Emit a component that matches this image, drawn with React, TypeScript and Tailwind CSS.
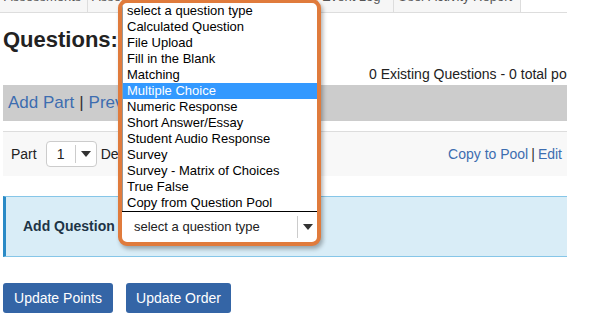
import React from 'react';

const questionTypes = [
  'select a question type',
  'Calculated Question',
  'File Upload',
  'Fill in the Blank',
  'Matching',
  'Multiple Choice',
  'Numeric Response',
  'Short Answer/Essay',
  'Student Audio Response',
  'Survey',
  'Survey - Matrix of Choices',
  'True False',
  'Copy from Question Pool',
];

const tabs = [
  { label: 'Assessments', width: 'w-[88px]' },
  { label: 'Assessment Types', width: 'w-[122px]' },
  { label: 'Question Pools', width: 'w-[108px]' },
  { label: 'Event Log', width: 'w-[76px]' },
  { label: 'User Activity Report', width: 'w-[127px]' },
];

function Caret() {
  return (
    <svg width="10" height="6" viewBox="0 0 10 6">
      <path d="M0 0 L10 0 L5 6 Z" fill="#333" />
    </svg>
  );
}

export default function App() {
  const selected = 'Multiple Choice';

  return (
    <div className="relative w-[597px] h-[314px] bg-white overflow-hidden font-['Liberation_Sans',Arial,sans-serif] text-[#333]">
      <div className="w-[567px] overflow-hidden">
        {/* Tabs, cut off at the top */}
        <div className="flex h-[13px] border-b border-[#dddddd] overflow-hidden">
          {tabs.map(t => (
            <div key={t.label} className={`${t.width} shrink-0 bg-[#f6f6f6] border-r border-[#dddddd] px-[4px] overflow-hidden`}>
              <div className="mt-[-11px] text-[13px] leading-[16px] text-[#555] whitespace-nowrap">{t.label}</div>
            </div>
          ))}
        </div>

        <div className="pl-[3px]">
          <h1 className="mt-[14px] text-[22px] leading-[26px] font-bold text-[#222] whitespace-nowrap">
            Questions: Test Assessment 2
          </h1>

          <div className="mt-[13px] flex justify-end">
            <span className="w-[198px] overflow-hidden whitespace-nowrap text-[14px] leading-[16px] text-[#222]">
              0 Existing Questions - 0 total points
            </span>
          </div>

          {/* Part actions bar */}
          <div className="mt-[3px] h-[36px] bg-[#cccccc] flex items-center px-[5px] text-[17px] whitespace-nowrap">
            <span className="text-[#3d6db0]">Add Part</span>
            <span className="mx-[5px] text-[#333]">|</span>
            <span className="text-[#3d6db0]">Preview</span>
          </div>

          {/* Part panel */}
          <div className="mt-[10px] h-[45px] bg-[#f8f8f8] border-t border-[#dddddd] flex items-center justify-between pl-[8px] pr-[5px] text-[14px]">
            <div className="flex items-center">
              <span className="text-[#222]">Part</span>
              <div className="ml-[9px] w-[51px] h-[26px] bg-white border border-[#cccccc] rounded-[4px] flex items-center">
                <span className="w-[28px] text-center text-[#222]">1</span>
                <div className="h-[18px] border-l border-[#cccccc]" />
                <div className="flex-1 flex justify-center">
                  <Caret />
                </div>
              </div>
              <span className="ml-[4px] text-[#222] whitespace-nowrap">Default Part</span>
            </div>
            <div className="whitespace-nowrap">
              <span className="text-[#3d6db0]">Copy to Pool</span>
              <span className="mx-[3px] text-[#333]">|</span>
              <span className="text-[#3d6db0]">Edit</span>
            </div>
          </div>

          {/* Add question panel */}
          <div className="mt-[20px] h-[61px] bg-[#d9edf7] border-y border-[#86c6e8] border-l-[3px] border-l-[#2a8ac6] flex items-center pl-[17px]">
            <span className="text-[14px] font-bold text-[#1d3446] whitespace-nowrap">Add Question</span>
          </div>

          <div className="mt-[26px] flex gap-[13px]">
            <button className="h-[30px] w-[110px] rounded-[3px] bg-[#3465a6] text-white text-[14px]">Update Points</button>
            <button className="h-[30px] w-[105px] rounded-[3px] bg-[#3465a6] text-white text-[14px]">Update Order</button>
          </div>
        </div>
      </div>

      {/* Open question-type dropdown, highlighted */}
      <div className="absolute left-[118px] top-[-1px] w-[203px] h-[247px] bg-white border-[4px] border-[#e07b3c] rounded-[9px] shadow-[2px_3px_4px_rgba(0,0,0,0.3)] overflow-hidden flex flex-col">
        <ul className="border-l border-[#999] text-[13px] text-black">
          {questionTypes.map(q => (
            <li
              key={q}
              className={`h-[16px] leading-[16px] pl-[4px] whitespace-nowrap ${q === selected ? 'bg-[#3399ff] text-white' : ''}`}
            >
              {q}
            </li>
          ))}
        </ul>
        <div className="flex-1 border-t border-black flex items-center text-[13px] text-[#222]">
          <span className="flex-1 pl-[12px]">select a question type</span>
          <div className="h-[22px] border-l border-[#cccccc]" />
          <div className="w-[19px] flex justify-center">
            <Caret />
          </div>
        </div>
      </div>
    </div>
  );
}
